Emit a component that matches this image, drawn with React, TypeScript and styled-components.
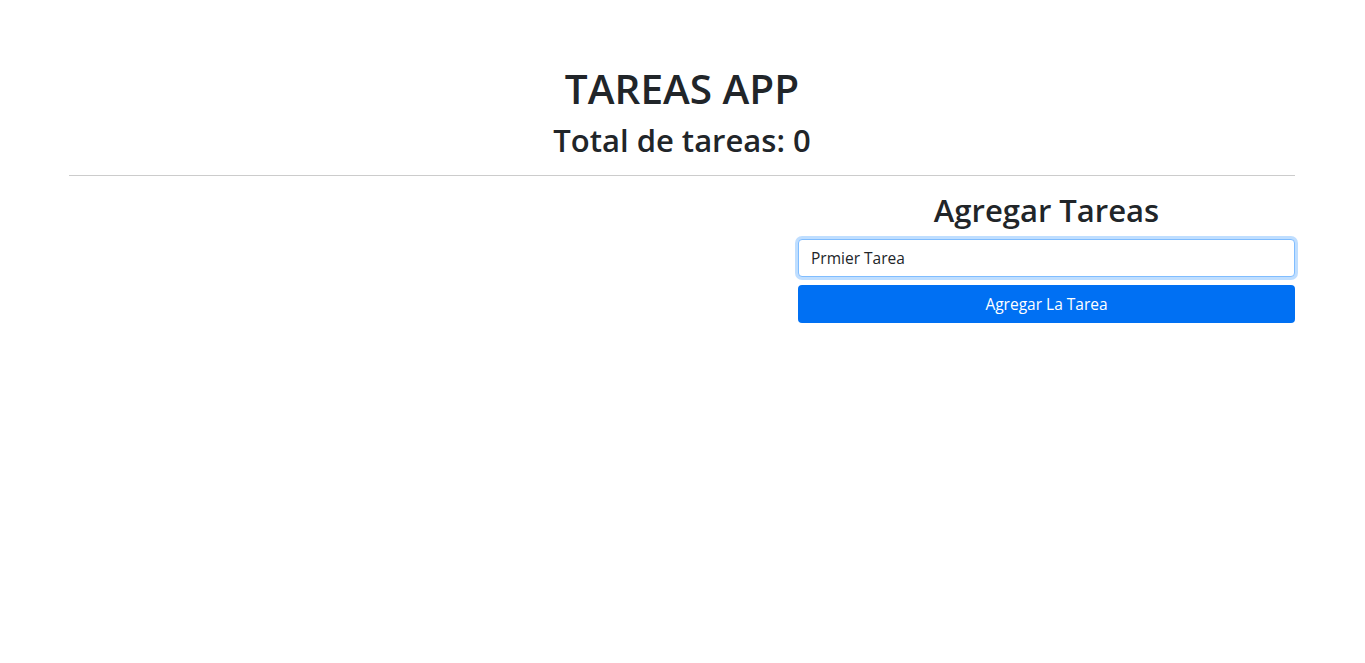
import React, { useState } from "react";
import styled, { createGlobalStyle } from "styled-components";

const GlobalStyle = createGlobalStyle`
  * { box-sizing: border-box; }
  body {
    margin: 0;
    background: #ffffff;
    color: #212529;
    font-family: "Open Sans", "Noto Sans", sans-serif;
  }
`;

const Page = styled.div`
  margin: 0 70px 0 69px;
  padding-top: 65px;
`;

const Header = styled.header`
  display: flex;
  flex-direction: column;
  align-items: center;
`;

const Title = styled.h1`
  margin: 0;
  font-size: 40.5px;
  font-weight: 600;
  line-height: 48px;
`;

const Subtitle = styled.h2`
  margin: 8px 0 0;
  font-size: 31px;
  font-weight: 600;
  line-height: 38px;
`;

const Divider = styled.hr`
  margin: 16px 0 0;
  border: 0;
  border-top: 1px solid #cccccc;
`;

const Row = styled.div`
  display: grid;
  grid-template-columns: 1fr 497px;
  padding-top: 16px;
`;

const Column = styled.section`
  display: flex;
  flex-direction: column;
`;

const SectionTitle = styled.h3`
  margin: 0 0 10px;
  text-align: center;
  font-size: 31px;
  font-weight: 600;
  line-height: 1.2;
`;

const Input = styled.input`
  height: 38px;
  padding: 6px 12px;
  font-family: inherit;
  font-size: 15.5px;
  color: #212529;
  border: 1px solid #80bdff;
  border-radius: 4px;
  outline: none;
  box-shadow: 0 0 0 3px rgba(0, 123, 255, 0.25);
`;

const Button = styled.button`
  margin-top: 8px;
  height: 38px;
  border: 0;
  border-radius: 4px;
  background: #0070f3;
  color: #ffffff;
  font-family: inherit;
  font-size: 15.5px;
  cursor: pointer;
`;

export default function App() {
  const [value, setValue] = useState("Prmier Tarea");
  return (
    <>
      <GlobalStyle />
      <Page>
        <Header>
          <Title>TAREAS APP</Title>
          <Subtitle>Total de tareas: 0</Subtitle>
        </Header>
        <Divider />
        <Row>
          <Column />
          <Column>
            <SectionTitle>Agregar Tareas</SectionTitle>
            <Input value={value} onChange={(e) => setValue(e.target.value)} />
            <Button>Agregar La Tarea</Button>
          </Column>
        </Row>
      </Page>
    </>
  );
}
